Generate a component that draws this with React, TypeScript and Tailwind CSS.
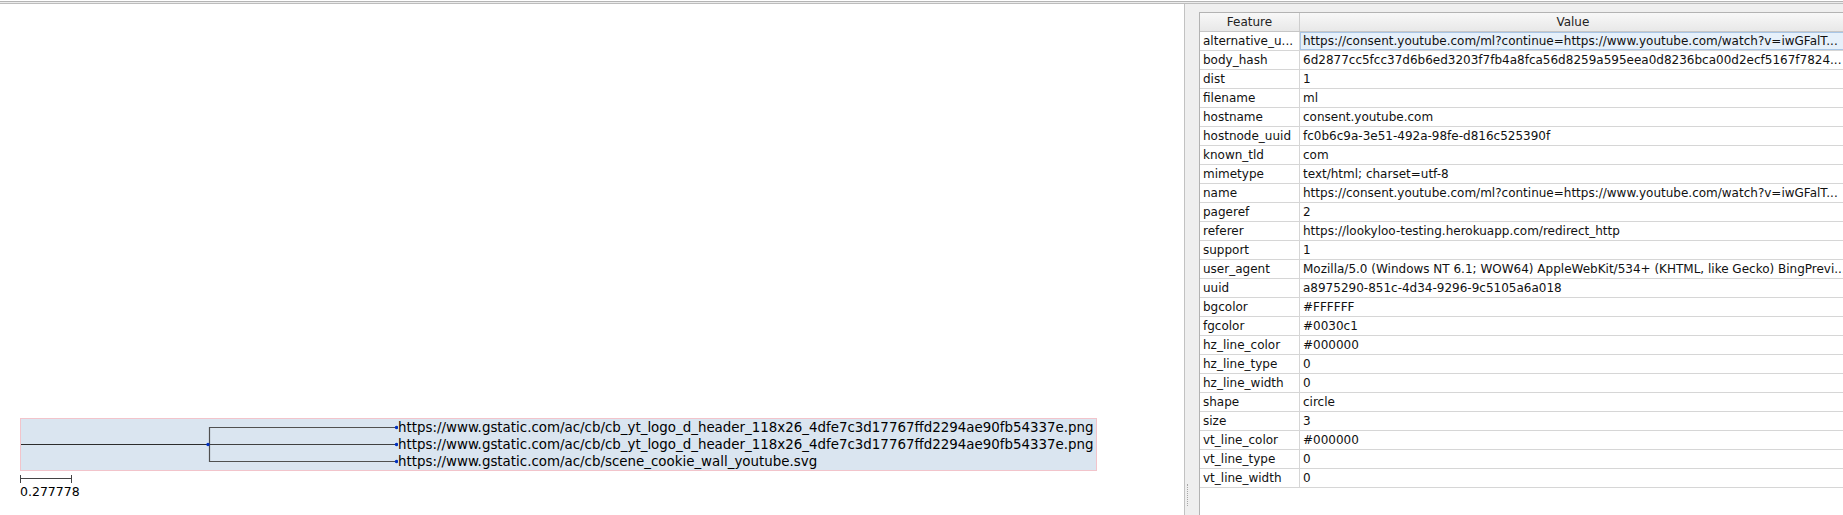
import React from "react";

const rows: [string, string][] = [
  ["alternative_u...", "https://consent.youtube.com/ml?continue=https://www.youtube.com/watch?v=iwGFalT..."],
  ["body_hash", "6d2877cc5fcc37d6b6ed3203f7fb4a8fca56d8259a595eea0d8236bca00d2ecf5167f7824..."],
  ["dist", "1"],
  ["filename", "ml"],
  ["hostname", "consent.youtube.com"],
  ["hostnode_uuid", "fc0b6c9a-3e51-492a-98fe-d816c525390f"],
  ["known_tld", "com"],
  ["mimetype", "text/html; charset=utf-8"],
  ["name", "https://consent.youtube.com/ml?continue=https://www.youtube.com/watch?v=iwGFalT..."],
  ["pageref", "2"],
  ["referer", "https://lookyloo-testing.herokuapp.com/redirect_http"],
  ["support", "1"],
  ["user_agent", "Mozilla/5.0 (Windows NT 6.1; WOW64) AppleWebKit/534+ (KHTML, like Gecko) BingPrevi..."],
  ["uuid", "a8975290-851c-4d34-9296-9c5105a6a018"],
  ["bgcolor", "#FFFFFF"],
  ["fgcolor", "#0030c1"],
  ["hz_line_color", "#000000"],
  ["hz_line_type", "0"],
  ["hz_line_width", "0"],
  ["shape", "circle"],
  ["size", "3"],
  ["vt_line_color", "#000000"],
  ["vt_line_type", "0"],
  ["vt_line_width", "0"],
];

const leaves = [
  "https://www.gstatic.com/ac/cb/cb_yt_logo_d_header_118x26_4dfe7c3d17767ffd2294ae90fb54337e.png",
  "https://www.gstatic.com/ac/cb/cb_yt_logo_d_header_118x26_4dfe7c3d17767ffd2294ae90fb54337e.png",
  "https://www.gstatic.com/ac/cb/scene_cookie_wall_youtube.svg",
];

export default function App() {
  return (
    <div className="w-[1843px] h-[515px] overflow-hidden bg-white flex flex-col font-['DejaVu_Sans',sans-serif] text-[#111]">
      <div className="h-px bg-white" />
      <div className="h-px bg-[#b4b4b4]" />
      <div className="h-px bg-[#ececec]" />
      <div className="h-px bg-[#bdbdbd]" />
      <div className="flex flex-1 min-h-0">
        {/* Tree panel */}
        <div className="w-[1185px] shrink-0 border-r border-[#c2c2c2] bg-white pt-[414px] pl-[20px] flex flex-col items-start">
          <div className="inline-flex border border-[#f2c4cb] bg-[#dae5f0]">
            <svg width="377" height="51" viewBox="0 0 377 51" className="shrink-0">
              <line x1="0" y1="25.5" x2="187" y2="25.5" stroke="#2c2c2c" strokeWidth="1" />
              <line x1="188.5" y1="8" x2="188.5" y2="43" stroke="#505050" strokeWidth="1.2" />
              <line x1="188.5" y1="8.5" x2="375" y2="8.5" stroke="#505050" strokeWidth="1.2" />
              <line x1="188.5" y1="25.5" x2="375" y2="25.5" stroke="#404040" strokeWidth="1.2" />
              <line x1="188.5" y1="42.5" x2="375" y2="42.5" stroke="#505050" strokeWidth="1.2" />
              <circle cx="187" cy="25.5" r="1.7" fill="#0030c1" />
              <circle cx="375.5" cy="8.5" r="1.7" fill="#0030c1" />
              <circle cx="375.5" cy="25.5" r="1.7" fill="#0030c1" />
              <circle cx="375.5" cy="42.5" r="1.7" fill="#0030c1" />
            </svg>
            <div className="flex flex-col pr-[2px]">
              {leaves.map((t, i) => (
                <div key={i} className="h-[17px] leading-[17px] text-[13.4px] whitespace-nowrap text-black">
                  {t}
                </div>
              ))}
            </div>
          </div>
          <svg width="60" height="12" viewBox="0 0 60 12" className="block">
            <line x1="0.5" y1="4" x2="0.5" y2="12" stroke="#444" strokeWidth="1" />
            <line x1="51.5" y1="4" x2="51.5" y2="12" stroke="#444" strokeWidth="1" />
            <line x1="0.5" y1="7.5" x2="51.5" y2="7.5" stroke="#444" strokeWidth="1" />
          </svg>
          <div className="mt-[2px] text-[12.5px] leading-[14px] text-black">0.277778</div>
        </div>

        {/* Properties panel */}
        <div className="relative flex-1 bg-[#efefef] pl-[14px] pr-[4px] pt-[8px] flex flex-col">
          <div className="absolute left-[2px] bottom-[9px] h-[22px] w-0 border-l border-dotted border-[#a8a8a8]" />
          <div className="flex-1 bg-white border border-[#b3b3b3] border-b-0 text-[12px]">
            <div className="flex h-[19px] border-b border-[#c6c6c6] bg-gradient-to-b from-[#f8f8f8] to-[#e8e8e8] text-[#222]">
              <div className="w-[100px] shrink-0 border-r border-[#cdcdcd] text-center leading-[18px]">Feature</div>
              <div className="flex-1 text-center leading-[18px]">Value</div>
            </div>
            {rows.map(([k, v], i) => (
              <div key={i} className="flex h-[19px] border-b border-[#d6d6d6]">
                <div className="w-[100px] shrink-0 border-r border-[#d6d6d6] pl-[3px] leading-[18px] whitespace-nowrap overflow-hidden">
                  {k}
                </div>
                <div
                  className={
                    i === 0
                      ? "flex-1 min-w-0 pl-[2px] leading-[16px] whitespace-nowrap overflow-hidden bg-[#e6f0fa] border border-[#a9c6e6]"
                      : "flex-1 min-w-0 pl-[3px] leading-[18px] whitespace-nowrap overflow-hidden"
                  }
                >
                  {v}
                </div>
              </div>
            ))}
          </div>
        </div>
      </div>
    </div>
  );
}
